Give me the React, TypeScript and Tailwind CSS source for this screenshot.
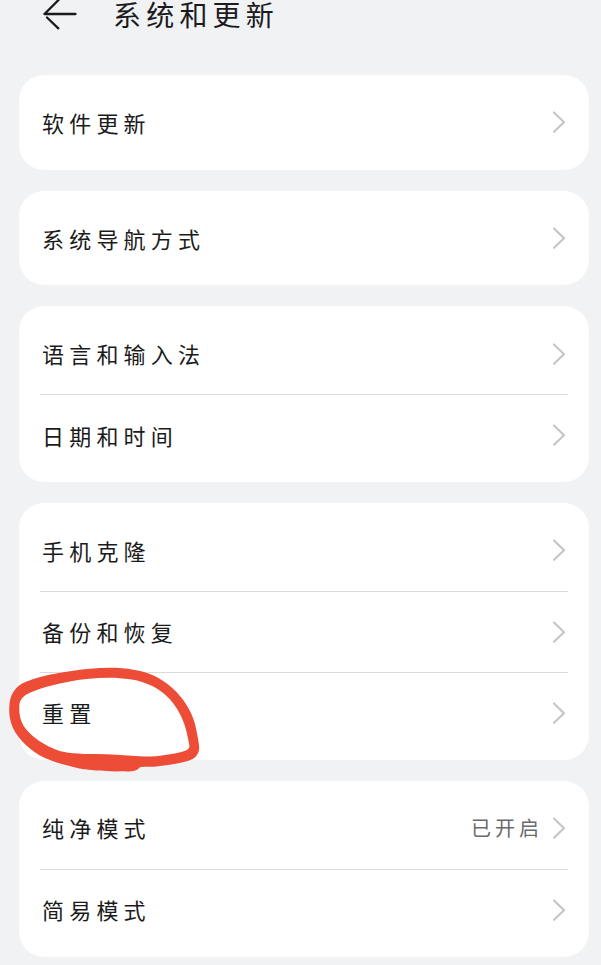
import React from 'react';

interface SettingItem {
  label: string;
  value?: string;
}

const groups: SettingItem[][] = [
  [{ label: '软件更新' }],
  [{ label: '系统导航方式' }],
  [{ label: '语言和输入法' }, { label: '日期和时间' }],
  [{ label: '手机克隆' }, { label: '备份和恢复' }, { label: '重置' }],
  [{ label: '纯净模式', value: '已开启' }, { label: '简易模式' }],
];

const BackArrow: React.FC = () => (
  <svg className="h-[36px] w-[36px] shrink-0" viewBox="0 0 36 36" fill="none" stroke="#1b1b1d" strokeWidth="2.3" strokeLinecap="round">
    <path d="M2.5 18H33.5M17 3.5L2.5 18M5 21.5L16.3 32.3" />
  </svg>
);

const Chevron: React.FC = () => (
  <svg className="h-6 w-[14px] shrink-0" viewBox="0 0 14 24" fill="none" stroke="#c6c6c6" strokeWidth="2.2" strokeLinecap="round" strokeLinejoin="round">
    <path d="M2 2.5L12 12.2L2 21.8" />
  </svg>
);

const SettingRow: React.FC<{ item: SettingItem; divided: boolean }> = ({ item, divided }) => (
  <li className={divided ? 'h-[81.1px] border-t border-[#dadada]' : 'h-[81.1px]'}>
    <button className="flex h-full w-full items-center pr-[2px] pl-[2px] text-left">
      <span className="flex-1 pb-[1px] text-[22px] leading-none tracking-[5.2px] text-[#1b1b1b]">{item.label}</span>
      {item.value && (
        <span className="mr-[9px] text-[20px] leading-none tracking-[4px] text-[#6b6b6b]">{item.value}</span>
      )}
      <Chevron />
    </button>
  </li>
);

// Hand drawn marker loop around the reset row
const MarkerLoop: React.FC = () => (
  <svg className="pointer-events-none absolute top-[655px] left-0 h-[125px] w-[210px]" viewBox="0 0 630 375">
    <path
      fill="#ed4d37"
      fillRule="evenodd"
      d="M28 155C29 119 45 93 78 80C130 59 205 47 270 41C315 37 365 37 400 44C449 51 483 69 516 98C552 130 575 169 585 207C590 229 594 248 597 270C600 288 592 304 578 312C549 326 505 329 463 335C446 336 430 334 417 338C413 347 399 350 370 349C320 350 270 347 235 340C192 329 151 319 117 300C78 275 44 241 33 203C28 186 27 170 28 155ZM58 155C58 139 64 128 78 119C112 101 165 88 213 79C270 67 345 65 390 73C441 80 481 102 511 134C536 162 555 204 560 232C563 247 566 258 568 270C570 280 563 286 551 289C510 301 456 307 418 304C370 300 329 297 285 297C241 298 210 295 181 289C133 272 91 244 71 213C60 194 57 174 58 155Z"
    />
  </svg>
);

const App: React.FC = () => {
  return (
    <div className="relative h-[965px] w-[601px] overflow-hidden bg-[#f1f2f4] font-['Noto_Sans_CJK_SC','Noto_Sans',sans-serif]">
      <header className="-mt-[4px] flex h-[36px] items-center gap-[35px] pl-[42px]">
        <BackArrow />
        <h1 className="text-[28px] leading-none tracking-[5.2px] text-[#1b1b1d]">系统和更新</h1>
      </header>

      <main className="mt-[43px] flex flex-col gap-[20.7px] pr-[12px] pl-[19px]">
        {groups.map((items) => (
          <ul key={items[0].label} className="rounded-[25px] bg-white px-[21px] py-[6.9px]">
            {items.map((item, i) => (
              <SettingRow key={item.label} item={item} divided={i > 0} />
            ))}
          </ul>
        ))}
      </main>

      <MarkerLoop />
    </div>
  );
};

export default App;
